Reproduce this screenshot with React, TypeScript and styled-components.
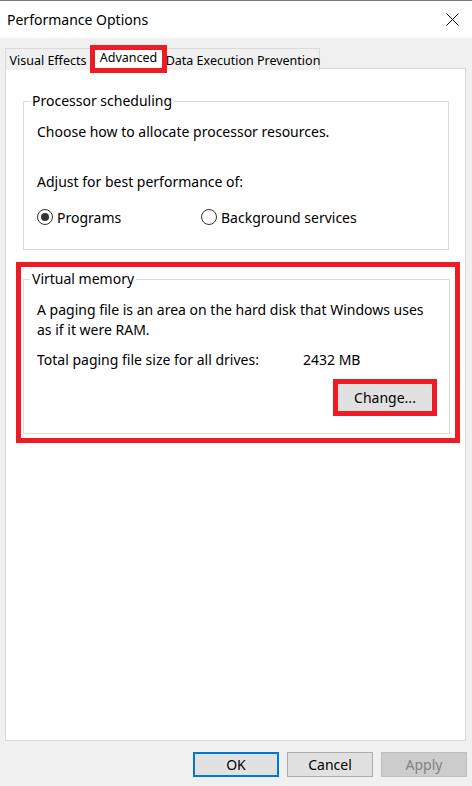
import styled, { createGlobalStyle } from "styled-components";

const GlobalStyle = createGlobalStyle`
  html, body {
    margin: 0;
    padding: 0;
    background: #f0f0f0;
  }
  body {
    font-family: "Noto Sans", "Liberation Sans", sans-serif;
    color: #000;
  }
  * {
    box-sizing: border-box;
  }
`;

const TABS = ["Visual Effects", "Advanced", "Data Execution Prevention"];
const TAB_WIDTHS = [85, 77, 153];

function App() {
  return (
    <Window>
      <GlobalStyle />
      <TitleBar>
        <span>Performance Options</span>
        <CloseButton aria-label="Close">
          <svg width="13" height="13" viewBox="0 0 13 13">
            <path d="M0.5 0.5 L12.5 12.5 M12.5 0.5 L0.5 12.5" stroke="#000" strokeWidth="1" fill="none" />
          </svg>
        </CloseButton>
      </TitleBar>
      <Body>
        <TabRow>
          {TABS.map((t, i) => (
            <Tab key={t} $active={i === 1} $width={TAB_WIDTHS[i]}>
              {t}
            </Tab>
          ))}
        </TabRow>
        <Panel>
          <GroupBox>
            <Legend>Processor scheduling</Legend>
            <Line>Choose how to allocate processor resources.</Line>
            <Line $gap={30}>Adjust for best performance of:</Line>
            <RadioRow>
              <RadioLabel $width={164}>
                <Radio $checked />
                Programs
              </RadioLabel>
              <RadioLabel>
                <Radio />
                Background services
              </RadioLabel>
            </RadioRow>
          </GroupBox>
          <Highlight $variant="box">
            <GroupBox $tight>
              <Legend>Virtual memory</Legend>
              <Line>
                A paging file is an area on the hard disk that Windows uses
                <br />
                as if it were RAM.
              </Line>
              <SizeRow>
                <span>Total paging file size for all drives:</span>
                <span>2432 MB</span>
              </SizeRow>
              <ButtonRow>
                <Highlight $variant="button">
                  <ChangeButton>Change...</ChangeButton>
                </Highlight>
              </ButtonRow>
            </GroupBox>
          </Highlight>
        </Panel>
        <Footer>
          <DialogButton $kind="default">OK</DialogButton>
          <DialogButton>Cancel</DialogButton>
          <DialogButton $kind="disabled">Apply</DialogButton>
        </Footer>
      </Body>
    </Window>
  );
}

const Window = styled.div`
  width: 472px;
  height: 786px;
  display: flex;
  flex-direction: column;
  background: #f0f0f0;
  overflow: hidden;
`;

const TitleBar = styled.div`
  height: 38px;
  flex: none;
  background: #fff;
  border-top: 1px solid #7a7a7a;
  display: flex;
  align-items: center;
  justify-content: space-between;
  padding: 0 13px 0 7px;
  font-size: 14px;
  line-height: 20px;
`;

const CloseButton = styled.div`
  width: 13px;
  height: 13px;
  display: flex;
  & > svg {
    display: block;
  }
`;

const Body = styled.div`
  flex: 1;
  display: flex;
  flex-direction: column;
  padding: 10px 5px 9px 5px;
`;

const TabRow = styled.div`
  display: flex;
  align-items: flex-start;
  height: 21px;
`;

const Tab = styled.div<{ $active?: boolean; $width: number }>`
  width: ${p => p.$width}px;
  flex: none;
  display: flex;
  align-items: center;
  justify-content: center;
  font-size: 12.5px;
  white-space: nowrap;
  position: relative;
  ${p =>
    p.$active
      ? `
    height: 28px;
    margin-top: -3px;
    background: #fff;
    border: 5px solid #ed1c24;
    z-index: 2;
    padding-bottom: 3px;
  `
      : `
    height: 22px;
    background: #f0f0f0;
    border: 1px solid #d9d9d9;
    border-bottom: none;
    padding-top: 1px;
  `}
  &:first-child {
    border-right: none;
  }
  &:last-child {
    border-left: none;
  }
`;

const Panel = styled.div`
  flex: 1;
  background: #fff;
  border: 1px solid #d9d9d9;
  display: flex;
  flex-direction: column;
  margin-top: -1px;
  margin-right: 1px;
  font-size: 14px;
`;

const GroupBox = styled.fieldset<{ $tight?: boolean }>`
  margin: ${p => (p.$tight ? "0" : "22px 16px 0 17px")};
  padding: 0 12px ${p => (p.$tight ? "17px" : "22px")} 13px;
  border: 1px solid #dcdcdc;
  min-width: 0;
`;

const Legend = styled.legend`
  margin-left: -7px;
  padding: 0 2px;
  line-height: 20px;
  font-size: 14px;
`;

const Line = styled.div<{ $gap?: number }>`
  margin-top: ${p => p.$gap ?? 11}px;
  line-height: 20px;
  white-space: nowrap;
`;

const RadioRow = styled.div`
  display: flex;
  margin-top: 15px;
  height: 20px;
  align-items: center;
`;

const RadioLabel = styled.label<{ $width?: number }>`
  display: flex;
  align-items: center;
  gap: 4px;
  ${p => (p.$width ? `width: ${p.$width}px;` : "")}
  white-space: nowrap;
`;

const Radio = styled.span<{ $checked?: boolean }>`
  width: 16px;
  height: 16px;
  border-radius: 50%;
  border: 1px solid #333;
  display: inline-flex;
  align-items: center;
  justify-content: center;
  flex: none;
  &::after {
    content: "";
    width: 8px;
    height: 8px;
    border-radius: 50%;
    background: ${p => (p.$checked ? "#333" : "transparent")};
  }
`;

const Highlight = styled.div<{ $variant: "box" | "button" }>`
  border: 5px solid #ed1c24;
  ${p =>
    p.$variant === "box"
      ? `
    margin: 12px 5px 0 10px;
    padding: 2px 5px 4px 2px;
  `
      : `
    display: inline-flex;
  `}
`;

const SizeRow = styled.div`
  display: grid;
  grid-template-columns: 266px auto;
  margin-top: 10px;
  line-height: 20px;
  white-space: nowrap;
`;

const ButtonRow = styled.div`
  display: flex;
  justify-content: flex-end;
  margin-top: 9px;
`;

const ChangeButton = styled.button`
  width: 94px;
  height: 27px;
  border: none;
  background: #e1e1e1;
  font-family: inherit;
  font-size: 14px;
  color: #000;
  padding: 0;
`;

const Footer = styled.div`
  display: flex;
  justify-content: flex-end;
  gap: 8px;
  margin-top: 11px;
`;

const DialogButton = styled.button<{ $kind?: "default" | "disabled" }>`
  width: 86px;
  height: 25px;
  font-family: inherit;
  font-size: 14px;
  padding: 0;
  background: ${p => (p.$kind === "disabled" ? "#cccccc" : "#e1e1e1")};
  color: ${p => (p.$kind === "disabled" ? "#838383" : "#000")};
  border: ${p =>
    p.$kind === "default"
      ? "2px solid #0078d7"
      : p.$kind === "disabled"
      ? "1px solid #bfbfbf"
      : "1px solid #adadad"};
`;

export default App;
